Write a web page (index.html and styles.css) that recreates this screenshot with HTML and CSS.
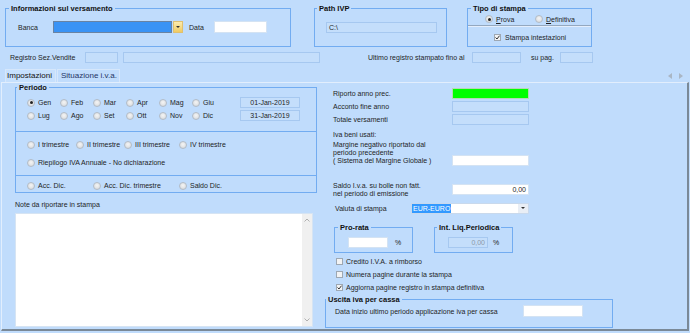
FILE: index.html
```html
<!DOCTYPE html>
<html>
<head>
<meta charset="utf-8">
<link rel="stylesheet" href="styles.css">
</head>
<body>
<div class="top">
  <fieldset class="grp g-vers">
    <legend class="lg3">Informazioni sul versamento</legend>
    <div class="row banca-row">
      <span class="w35">Banca</span>
      <div class="combo-banca"><div class="combo-sel"></div><div class="combo-btn"><i class="caret"></i></div></div>
      <span class="data-lbl">Data</span>
      <div class="field white w53"></div>
    </div>
  </fieldset>
  <fieldset class="grp g-path">
    <legend>Path IVP</legend>
    <div class="path-wrap"><div class="field path-field">C:\</div></div>
  </fieldset>
  <fieldset class="grp g-tipo">
    <legend class="lg3">Tipo di stampa</legend>
    <div class="tipo-radios">
      <span class="radio w50"><i class="rb on"></i><span><u>P</u>rova</span></span>
      <span class="radio"><i class="rb"></i><span><u>D</u>efinitiva</span></span>
    </div>
    <div class="sep"></div>
    <div class="tipo-check"><span class="check"><i class="cb"><svg width="5" height="5" viewBox="0 0 5 5"><path d="M0.5 2.5 L2 4 L4.5 0.7" fill="none" stroke="#333" stroke-width="1"/></svg></i><span>Stampa intestazioni</span></span></div>
  </fieldset>
</div>

<div class="row2">
  <span class="w75">Registro Sez.Vendite</span>
  <div class="field w33"></div>
  <div class="field w197"></div>
  <span class="ultimo-lbl">Ultimo registro stampato fino al</span>
  <div class="field w49"></div>
  <span class="supag-lbl">su pag.</span>
  <div class="field w33b"></div>
</div>

<div class="tabs">
  <div class="tab tab1">Impostazioni</div>
  <div class="tab tab2">Situazione i.v.a.</div>
  <div class="tab-arrows"><i class="arr-l"></i><i class="arr-r"></i></div>
</div>

<div class="panel">
  <div class="lcol">
    <fieldset class="grp periodo">
      <legend class="lg1">Periodo</legend>
      <div class="sec1">
        <div class="prow">
          <span class="radio w33r"><i class="rb on"></i><span>Gen</span></span>
          <span class="radio w33r"><i class="rb"></i><span>Feb</span></span>
          <span class="radio w33r"><i class="rb"></i><span>Mar</span></span>
          <span class="radio w33r"><i class="rb"></i><span>Apr</span></span>
          <span class="radio w33r"><i class="rb"></i><span>Mag</span></span>
          <span class="radio w33r"><i class="rb"></i><span>Giu</span></span>
          <div class="field datef">01-Jan-2019</div>
        </div>
        <div class="prow">
          <span class="radio w33r"><i class="rb"></i><span>Lug</span></span>
          <span class="radio w33r"><i class="rb"></i><span>Ago</span></span>
          <span class="radio w33r"><i class="rb"></i><span>Set</span></span>
          <span class="radio w33r"><i class="rb"></i><span>Ott</span></span>
          <span class="radio w33r"><i class="rb"></i><span>Nov</span></span>
          <span class="radio w33r"><i class="rb"></i><span>Dic</span></span>
          <div class="field datef">31-Jan-2019</div>
        </div>
      </div>
      <div class="sec2">
        <div class="prow">
          <span class="radio w49"><i class="rb"></i><span>I trimestre</span></span>
          <span class="radio w48"><i class="rb"></i><span>II trimestre</span></span>
          <span class="radio w55"><i class="rb"></i><span>III trimestre</span></span>
          <span class="radio"><i class="rb"></i><span>IV trimestre</span></span>
        </div>
        <div class="prow gap5">
          <span class="radio"><i class="rb"></i><span>Riepilogo IVA Annuale - No dichiarazione</span></span>
        </div>
      </div>
      <div class="sec3">
        <div class="prow">
          <span class="radio w66"><i class="rb"></i><span>Acc. Dic.</span></span>
          <span class="radio w86"><i class="rb"></i><span>Acc. Dic. trimestre</span></span>
          <span class="radio"><i class="rb"></i><span>Saldo Dic.</span></span>
        </div>
      </div>
    </fieldset>
    <div class="note-lbl">Note da riportare in stampa</div>
    <div class="note-box">
      <div class="note-text"></div>
      <div class="vscroll">
        <svg width="6" height="4" viewBox="0 0 6 4"><path d="M0.5 3.5 L3 1 L5.5 3.5" fill="none" stroke="#a0a0a0" stroke-width="0.8"/></svg>
        <svg width="6" height="4" viewBox="0 0 6 4"><path d="M0.5 0.5 L3 3 L5.5 0.5" fill="none" stroke="#a0a0a0" stroke-width="0.8"/></svg>
      </div>
    </div>
  </div>

  <div class="rcol">
    <div class="rrow first"><span class="rlbl">Riporto anno prec.</span><div class="field green w77"></div></div>
    <div class="rrow"><span class="rlbl">Acconto fine anno</span><div class="field w77"></div></div>
    <div class="rrow"><span class="rlbl">Totale versamenti</span><div class="field w77"></div></div>
    <div class="iva-block">
      <div class="rlbl">
        <div class="l1">Iva beni usati:</div>
        <div class="ln">Margine negativo riportato dal</div>
        <div class="ln">periodo precedente</div>
        <div class="ln">( Sistema del Margine Globale )</div>
      </div>
      <div class="field white w77"></div>
    </div>
    <div class="saldo-block">
      <div class="rlbl">
        <div class="ls">Saldo I.v.a. su bolle non fatt.</div>
        <div class="ls">nel periodo di emissione</div>
      </div>
      <div class="field white w77 num">0,00</div>
    </div>
    <div class="valuta-row">
      <span class="vlbl">Valuta di stampa</span>
      <div class="combo-val"><span class="val-sel">EUR-EURO</span><div class="val-btn"><i class="caret"></i></div></div>
    </div>
    <div class="pct-row">
      <fieldset class="grp prorata">
        <legend class="lg3">Pro-rata</legend>
        <div class="pct-in"><div class="field white w40"></div><span class="pct pct1">%</span></div>
      </fieldset>
      <fieldset class="grp intliq">
        <legend>Int. Liq.Periodica</legend>
        <div class="pct-in"><div class="field w40 num dim">0,00</div><span class="pct pct2">%</span></div>
      </fieldset>
    </div>
    <div class="checks">
      <div class="crow"><i class="cb"></i><span>Credito I.V.A. a rimborso</span></div>
      <div class="crow"><i class="cb"></i><span>Numera pagine durante la stampa</span></div>
      <div class="crow"><i class="cb"><svg width="5" height="5" viewBox="0 0 5 5"><path d="M0.5 2.5 L2 4 L4.5 0.7" fill="none" stroke="#333" stroke-width="1"/></svg></i><span>Aggiorna pagine registro in stampa definitiva</span></div>
    </div>
    <fieldset class="grp uscita">
      <legend class="lg0">Uscita iva per cassa</legend>
      <div class="usc-row"><span class="usc-lbl">Data inizio ultimo periodo applicazione iva per cassa</span><div class="field white w60"></div></div>
    </fieldset>
  </div>
</div>
</body>
</html>
```

FILE: styles.css
```css
* { box-sizing: border-box; margin: 0; padding: 0; }
html, body { width: 690px; height: 333px; overflow: hidden; }
body {
  background: #c0dcfc;
  font: 7px/9px "Liberation Sans", Arial, sans-serif;
  color: #1e1e1e;
}
i { font-style: normal; }

fieldset.grp { border: 1px solid #72acf1; min-width: 0; padding: 0; }
legend {
  font-weight: bold; font-size: 7.5px; line-height: 9px;
  padding: 0 2px; margin-left: 2px; color: #111;
}
legend.lg3 { margin-left: 3px; }
legend.lg1 { margin-left: 1px; }
legend.lg0 { margin-left: 0; }

.row { display: flex; align-items: center; }

.field {
  height: 11px; border: 1px solid #a6c8f0; background: #c4defb;
  flex: none; line-height: 9px;
}
.field.white { background: #fff; border-color: #d4e3f3; }
.field.green { background: #00ff00; border-color: #b5d9b5; }
.num { text-align: right; padding-right: 2px; }
.dim { color: #8a98a8; }

/* top groups */
.top { display: flex; align-items: flex-start; height: 48px; }
.g-vers { margin: 4px 0 0 5px; width: 286px; height: 43px; }
.banca-row { height: 12px; margin-top: 8px; padding-left: 12px; }
.w35 { width: 35px; flex: none; }
.combo-banca { display: flex; width: 130px; height: 12px; flex: none; }
.combo-sel { width: 119px; background: #3a93f5; border: 1px solid #6a83a2; }
.combo-btn {
  width: 10px; margin-left: 1px; display: flex; align-items: center; justify-content: center;
  background: linear-gradient(#fcebad, #efcb62); border: 1px solid #e0c070;
}
.caret {
  width: 0; height: 0; border-left: 2px solid transparent; border-right: 2px solid transparent;
  border-top: 2px solid #333;
}
.data-lbl { margin-left: 6px; width: 25px; flex: none; }
.w53 { width: 53px; height: 12px; }

.g-path { margin: 4px 0 0 23px; width: 133px; height: 43px; }
.path-wrap { padding: 9px 0 0 11px; }
.path-field { width: 111px; padding-left: 2px; }

.g-tipo { margin: 4px 0 0 20px; width: 125px; height: 43px; }
.tipo-radios { display: flex; align-items: center; height: 12px; padding-left: 17px; }
.sep { height: 2px; border-top: 1px solid #94a8bf; border-bottom: 1px solid #e4eefc; }
.tipo-check { display: flex; align-items: center; height: 12px; margin-top: 4px; padding-left: 26px; }
.check { display: inline-flex; align-items: center; gap: 4px; }

.radio { display: inline-flex; align-items: center; gap: 3px; flex: none; white-space: nowrap; }
.rb {
  width: 8px; height: 8px; border-radius: 50%; flex: none;
  border: 1px solid #b3bcc7;
  background: radial-gradient(circle at 50% 40%, #f4f4f4 0%, #e2e4e6 55%, #cdd1d6 100%);
  display: inline-flex; align-items: center; justify-content: center;
}
.rb.on::after { content: ""; width: 3px; height: 3px; border-radius: 50%; background: #222; }
.cb {
  width: 7px; height: 7px; flex: none; border: 1px solid #9ea8b3; background: #f2f3f4;
  display: inline-flex; align-items: center; justify-content: center;
}
.w50 { width: 50px; }

/* row 2 */
.row2 { display: flex; align-items: center; height: 13px; margin-top: 3px; padding-left: 10px; }
.w75 { width: 75px; flex: none; }
.w33 { width: 33px; }
.w197 { width: 197px; margin-left: 5px; }
.ultimo-lbl { margin-left: 48px; width: 104px; flex: none; white-space: nowrap; }
.w49 { width: 49px; }
.supag-lbl { margin-left: 10px; width: 29px; flex: none; }
.w33b { width: 33px; }

/* tabs */
.tabs { display: flex; align-items: flex-end; height: 13px; margin-top: 5px; }
.tab {
  height: 13px; font-size: 8px; line-height: 12px; white-space: nowrap;
  border: 1px solid #d6e7fb; border-bottom: none;
}
.tab1 { margin-left: 5px; width: 51px; padding-left: 1px; color: #111; background: #c6e0fd; }
.tab2 { margin-left: 1px; width: 63px; padding-left: 3px; color: #1f3566; }
.tab-arrows { margin-left: auto; margin-right: 7px; display: flex; align-items: center; gap: 7px; height: 13px; }
.arr-l, .arr-r { width: 0; height: 0; border-top: 3px solid transparent; border-bottom: 3px solid transparent; }
.arr-l { border-right: 4px solid #a9b6c4; }
.arr-r { border-left: 4px solid #a9b6c4; }

/* panel */
.panel {
  display: flex; margin-left: 1px; width: 688px; height: 249px;
  border-top: 1px solid #e2eefd; border-left: 1px solid #e2eefd;
  border-right: 2px solid #7a8997; border-bottom: 2px solid #7a8997;
}
.lcol { width: 323px; flex: none; padding-left: 13px; }
.periodo { width: 302px; height: 110px; }
.sec1 { padding: 4px 0 9px 11px; }
.sec2 { border-top: 1px solid #72acf1; padding: 6px 0 6px 11px; }
.sec3 { border-top: 1px solid #72acf1; padding: 3px 0 0 11px; }
.prow { display: flex; align-items: center; height: 13px; }
.prow.gap5 { margin-top: 5px; }
.w33r { width: 33px; }
.w49 { width: 49px; }
.w48 { width: 48px; }
.w55 { width: 55px; }
.w66 { width: 66px; }
.w86 { width: 86px; }
.datef { margin-left: 15px; width: 60px; text-align: center; }

.note-lbl { margin-top: 7px; line-height: 9px; }
.note-box {
  display: flex; margin-top: 4px; width: 298px; height: 114px;
  background: #fff; border: 1px solid #d6e4f3;
}
.note-text { flex: 1; }
.vscroll {
  width: 10px; background: #f0f0f0; display: flex; flex-direction: column;
  justify-content: space-between; align-items: center; padding: 4px 0;
}

/* right column */
.rcol { width: 288px; flex: none; display: flex; flex-direction: column; }
.rrow { display: flex; align-items: center; height: 13px; padding-left: 8px; }
.rrow.first { margin-top: 4px; }
.rlbl { width: 119px; flex: none; white-space: nowrap; }
.w77 { width: 77px; }
.iva-block { display: flex; align-items: flex-end; margin-top: 4px; padding-left: 8px; }
.l1 { line-height: 9px; margin-bottom: 2px; }
.ln { line-height: 8.2px; }
.saldo-block { display: flex; align-items: center; margin-top: 16px; padding-left: 8px; }
.ls { line-height: 8px; }
.valuta-row { display: flex; align-items: center; height: 11px; margin-top: 5px; padding-left: 10px; }
.vlbl { width: 76px; flex: none; }
.combo-val {
  display: flex; align-items: center; width: 118px; height: 11px;
  background: #fff; border: 1px solid #c9d9ec;
}
.val-sel { background: #3399ff; color: #fff; padding: 0 1px; line-height: 9px; }
.val-btn {
  margin-left: auto; width: 10px; height: 9px; background: #e9eef5;
  display: flex; align-items: center; justify-content: center;
}
.pct-row { display: flex; margin-top: 9px; }
.prorata { margin-left: 9px; width: 79px; height: 30px; }
.intliq { margin-left: 21px; width: 79px; height: 30px; }
.pct-in { display: flex; align-items: center; padding: 5px 0 0 13px; }
.w40 { width: 40px; }
.pct1 { margin-left: 7px; }
.pct2 { margin-left: 5px; }
.checks { margin-top: 2px; padding-left: 11px; }
.crow { display: flex; align-items: center; gap: 3px; height: 13.3px; }
.uscita { width: 288px; height: 33px; }
.usc-row { display: flex; align-items: center; height: 12px; margin-top: 1.5px; padding-left: 9px; }
.usc-lbl { width: 188px; flex: none; white-space: nowrap; }
.w60 { width: 60px; height: 12px; }
```
